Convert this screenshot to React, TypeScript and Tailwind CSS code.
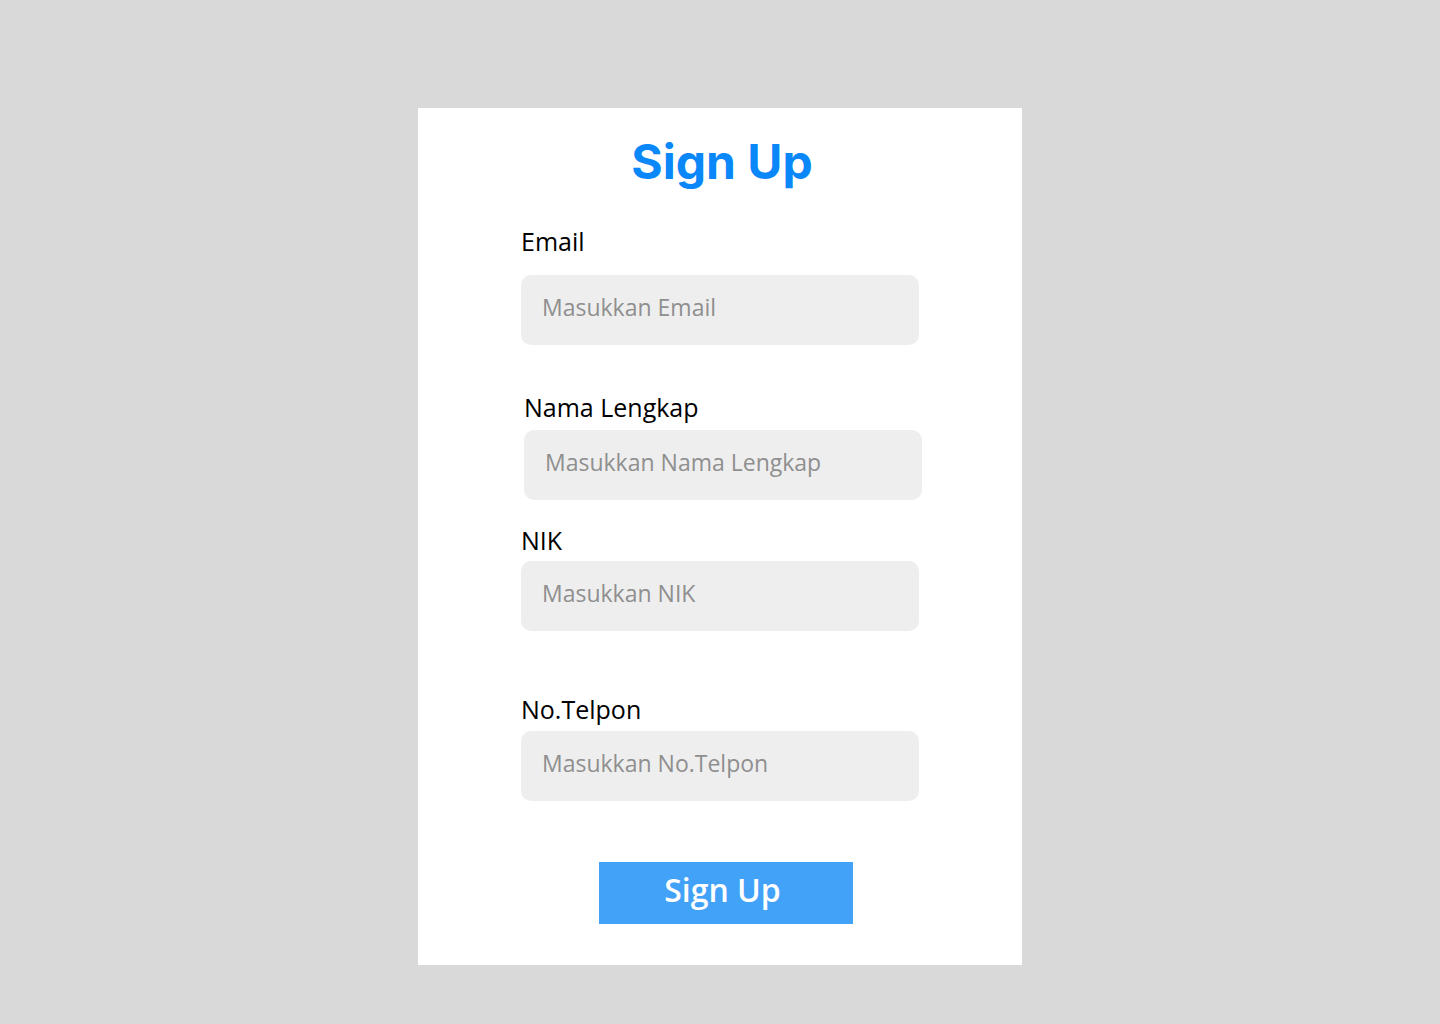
import React from "react";

const labelCls =
  "block text-[25px] leading-[34px] text-black font-['Open_Sans',sans-serif]";
const inputCls =
  "w-[398px] h-[70px] rounded-[10px] bg-[#eeeeee] px-[21px] pb-[6px] text-[23px] text-black outline-none placeholder:text-[#8f8f8f] font-['Open_Sans',sans-serif]";

export default function App() {
  return (
    <div className="min-h-screen w-full bg-[#d9d9d9] flex justify-center pt-[108px] font-['Open_Sans',sans-serif]">
      <div className="w-[604px] h-[857px] bg-white flex flex-col">
        <h1 className="mt-[30px] pl-[4px] text-center text-[48px] leading-[48px] font-bold text-[#0a87f8] font-['Inter',sans-serif]">
          Sign Up
        </h1>

        <div className="ml-[103px] mt-[38px] flex flex-col">
          <label className={labelCls}>Email</label>
          <input className={`${inputCls} mt-[17px]`} placeholder="Masukkan Email" />
        </div>

        <div className="ml-[106px] mt-[45px] flex flex-col">
          <label className={labelCls}>Nama Lengkap</label>
          <input className={`${inputCls} mt-[6px]`} placeholder="Masukkan Nama Lengkap" />
        </div>

        <div className="ml-[103px] mt-[23px] flex flex-col">
          <label className={labelCls}>NIK</label>
          <input className={`${inputCls} mt-[4px]`} placeholder="Masukkan NIK" />
        </div>

        <div className="ml-[103px] mt-[61px] flex flex-col">
          <label className={labelCls}>No.Telpon</label>
          <input className={`${inputCls} mt-[5px]`} placeholder="Masukkan No.Telpon" />
        </div>

        <button className="ml-[181px] mt-[61px] w-[254px] h-[62px] bg-[#42a2f8] text-white text-[32px] font-semibold leading-none pb-[6px] pr-[7px] font-['Open_Sans',sans-serif]">
          Sign Up
        </button>
      </div>
    </div>
  );
}
